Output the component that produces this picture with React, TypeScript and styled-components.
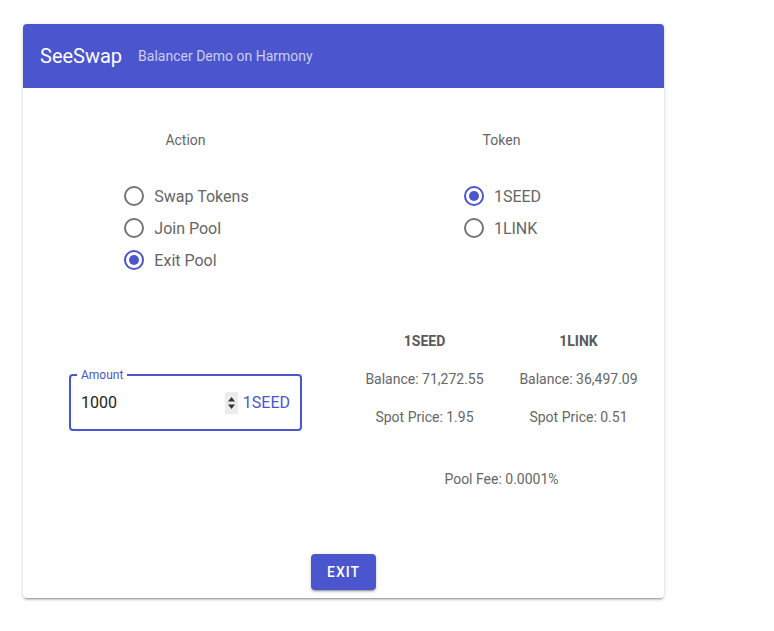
import React, { useState } from "react";
import styled, { createGlobalStyle } from "styled-components";

const INDIGO = "#4a55ce";

const Global = createGlobalStyle`
  html, body { margin: 0; padding: 0; background: #fff; }
  body { font-family: Roboto, "Noto Sans", "Liberation Sans", sans-serif; }
  * { box-sizing: border-box; }
`;

const Page = styled.div`
  padding: 24px 0 24px 23px;
  min-height: 631px;
`;

const Card = styled.div`
  width: 641px;
  background: #fff;
  border-radius: 4px;
  overflow: hidden;
  box-shadow: 0px 3px 1px -2px rgba(0,0,0,0.2), 0px 2px 2px 0px rgba(0,0,0,0.14), 0px 1px 5px 0px rgba(0,0,0,0.12);
`;

const Header = styled.header`
  height: 64px;
  background: ${INDIGO};
  display: flex;
  align-items: center;
  padding: 0 17px;
  gap: 16px;
`;

const Title = styled.h1`
  margin: 0;
  font-size: 20px;
  font-weight: 400;
  color: #fff;
  line-height: 24px;
`;

const Subtitle = styled.span`
  font-size: 14px;
  color: rgba(255,255,255,0.72);
  line-height: 20px;
`;

const Body = styled.div`
  padding: 42px 0 8px;
  display: flex;
  flex-direction: column;
  align-items: center;
`;

const TwoCols = styled.div<{ $mt?: number }>`
  display: grid;
  grid-template-columns: 316px 316px;
  margin-top: ${(p) => p.$mt ?? 0}px;
  align-items: start;
`;

const Col = styled.div`
  display: flex;
  flex-direction: column;
  align-items: center;
`;

const GroupLabel = styled.div`
  font-size: 14px;
  line-height: 20px;
  color: #666;
`;

const RadioGroup = styled.div`
  margin-top: 30px;
  margin-left: 2px;
  display: flex;
  flex-direction: column;
`;

const RadioRow = styled.label`
  height: 32px;
  display: flex;
  align-items: center;
  gap: 10px;
  cursor: pointer;
  font-size: 16px;
  color: #666;
`;

const Circle = styled.span<{ $on: boolean }>`
  width: 20px;
  height: 20px;
  border-radius: 50%;
  border: 2px solid ${(p) => (p.$on ? INDIGO : "#757575")};
  display: flex;
  align-items: center;
  justify-content: center;
  &::after {
    content: "";
    width: 10px;
    height: 10px;
    border-radius: 50%;
    background: ${INDIGO};
    display: ${(p) => (p.$on ? "block" : "none")};
  }
`;

const Field = styled.div`
  position: relative;
  margin-top: 43px;
  width: 233px;
  height: 57px;
  border: 2px solid ${INDIGO};
  border-radius: 4px;
  display: flex;
  align-items: center;
  padding: 0 10px;
`;

const FieldLabel = styled.span`
  position: absolute;
  top: -8px;
  left: 6px;
  padding: 0 4px;
  background: #fff;
  font-size: 12px;
  line-height: 14px;
  color: ${INDIGO};
`;

const Input = styled.input`
  flex: 1;
  min-width: 0;
  border: none;
  outline: none;
  padding: 0;
  font-family: inherit;
  font-size: 16px;
  color: #222;
  background: transparent;
`;

const Spinner = styled.span`
  width: 13px;
  height: 22px;
  background: #ececec;
  display: flex;
  align-items: center;
  justify-content: center;
`;

const Unit = styled.span`
  margin-left: 5px;
  font-size: 16px;
  color: ${INDIGO};
`;

const Stats = styled.div`
  display: grid;
  grid-template-columns: 154px 154px;
  row-gap: 18px;
  text-align: center;
`;

const StatHead = styled.div`
  font-size: 14px;
  font-weight: 700;
  line-height: 20px;
  color: #5a5a5a;
`;

const StatCell = styled.div`
  font-size: 14px;
  line-height: 20px;
  color: #666;
`;

const Fee = styled.div`
  margin-top: 42px;
  font-size: 14px;
  line-height: 20px;
  color: #666;
`;

const Button = styled.button`
  margin-top: 65px;
  height: 36px;
  min-width: 64px;
  padding: 0 16px;
  border: none;
  border-radius: 4px;
  background: ${INDIGO};
  color: #fff;
  font-family: inherit;
  font-size: 14px;
  font-weight: 500;
  letter-spacing: 1px;
  text-transform: uppercase;
  cursor: pointer;
  box-shadow: 0px 3px 1px -2px rgba(0,0,0,0.2), 0px 2px 2px 0px rgba(0,0,0,0.14), 0px 1px 5px 0px rgba(0,0,0,0.12);
`;

function Radio({ label, on, onClick }: { label: string; on: boolean; onClick: () => void }) {
  return (
    <RadioRow onClick={onClick}>
      <Circle $on={on} />
      {label}
    </RadioRow>
  );
}

export default function App() {
  const [action, setAction] = useState("Exit Pool");
  const [token, setToken] = useState("1SEED");
  const [amount, setAmount] = useState("1000");
  return (
    <Page>
      <Global />
      <Card>
        <Header>
          <Title>SeeSwap</Title>
          <Subtitle>Balancer Demo on Harmony</Subtitle>
        </Header>
        <Body>
          <TwoCols>
            <Col>
              <GroupLabel>Action</GroupLabel>
              <RadioGroup>
                {["Swap Tokens", "Join Pool", "Exit Pool"].map((a) => (
                  <Radio key={a} label={a} on={action === a} onClick={() => setAction(a)} />
                ))}
              </RadioGroup>
            </Col>
            <Col>
              <GroupLabel>Token</GroupLabel>
              <RadioGroup>
                {["1SEED", "1LINK"].map((t) => (
                  <Radio key={t} label={t} on={token === t} onClick={() => setToken(t)} />
                ))}
              </RadioGroup>
            </Col>
          </TwoCols>
          <TwoCols $mt={55}>
            <Col>
              <Field>
                <FieldLabel>Amount</FieldLabel>
                <Input value={amount} onChange={(e) => setAmount(e.target.value)} />
                <Spinner>
                  <svg width="9" height="16" viewBox="0 0 9 16">
                    <path d="M1 6.5 L4.5 2 L8 6.5 Z" fill="#333" />
                    <path d="M1 9.5 L4.5 14 L8 9.5 Z" fill="#333" />
                  </svg>
                </Spinner>
                <Unit>{token}</Unit>
              </Field>
            </Col>
            <Col>
              <Stats>
                <StatHead>1SEED</StatHead>
                <StatHead>1LINK</StatHead>
                <StatCell>Balance: 71,272.55</StatCell>
                <StatCell>Balance: 36,497.09</StatCell>
                <StatCell>Spot Price: 1.95</StatCell>
                <StatCell>Spot Price: 0.51</StatCell>
              </Stats>
              <Fee>Pool Fee: 0.0001%</Fee>
            </Col>
          </TwoCols>
          <Button>Exit</Button>
        </Body>
      </Card>
    </Page>
  );
}
